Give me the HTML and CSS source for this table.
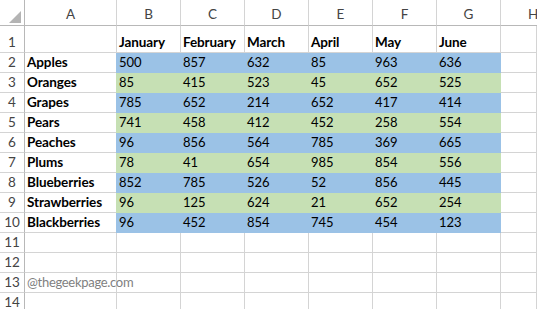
FILE: index.html
```html
<!DOCTYPE html>
<html>
<head>
<meta charset="utf-8">
<link rel="stylesheet" href="styles.css">
</head>
<body>
<div class="sheet">
  <div class="c corner"><span class="tri"></span></div>
  <div class="c ch">A</div><div class="c ch">B</div><div class="c ch">C</div><div class="c ch">D</div><div class="c ch">E</div><div class="c ch">F</div><div class="c ch">G</div><div class="c ch last">H</div>

  <div class="c rh r1">1</div><div class="c r1"></div><div class="c r1 b">January</div><div class="c r1 b">February</div><div class="c r1 b">March</div><div class="c r1 b">April</div><div class="c r1 b">May</div><div class="c r1 b">June</div><div class="c r1"></div>

  <div class="c rh">2</div><div class="c b">Apples</div><div class="c blue first">500</div><div class="c blue">857</div><div class="c blue">632</div><div class="c blue">85</div><div class="c blue">963</div><div class="c blue">636</div><div class="c"></div>
  <div class="c rh">3</div><div class="c b">Oranges</div><div class="c green first">85</div><div class="c green">415</div><div class="c green">523</div><div class="c green">45</div><div class="c green">652</div><div class="c green">525</div><div class="c"></div>
  <div class="c rh">4</div><div class="c b">Grapes</div><div class="c blue first">785</div><div class="c blue">652</div><div class="c blue">214</div><div class="c blue">652</div><div class="c blue">417</div><div class="c blue">414</div><div class="c"></div>
  <div class="c rh">5</div><div class="c b">Pears</div><div class="c green first">741</div><div class="c green">458</div><div class="c green">412</div><div class="c green">452</div><div class="c green">258</div><div class="c green">554</div><div class="c"></div>
  <div class="c rh">6</div><div class="c b">Peaches</div><div class="c blue first">96</div><div class="c blue">856</div><div class="c blue">564</div><div class="c blue">785</div><div class="c blue">369</div><div class="c blue">665</div><div class="c"></div>
  <div class="c rh">7</div><div class="c b">Plums</div><div class="c green first">78</div><div class="c green">41</div><div class="c green">654</div><div class="c green">985</div><div class="c green">854</div><div class="c green">556</div><div class="c"></div>
  <div class="c rh">8</div><div class="c b">Blueberries</div><div class="c blue first">852</div><div class="c blue">785</div><div class="c blue">526</div><div class="c blue">52</div><div class="c blue">856</div><div class="c blue">445</div><div class="c"></div>
  <div class="c rh">9</div><div class="c b">Strawberries</div><div class="c green first">96</div><div class="c green">125</div><div class="c green">624</div><div class="c green">21</div><div class="c green">652</div><div class="c green">254</div><div class="c"></div>
  <div class="c rh">10</div><div class="c b">Blackberries</div><div class="c blue first">96</div><div class="c blue">452</div><div class="c blue">854</div><div class="c blue">745</div><div class="c blue">454</div><div class="c blue">123</div><div class="c"></div>

  <div class="c rh">11</div><div class="c"></div><div class="c"></div><div class="c"></div><div class="c"></div><div class="c"></div><div class="c"></div><div class="c"></div><div class="c"></div>
  <div class="c rh">12</div><div class="c"></div><div class="c"></div><div class="c"></div><div class="c"></div><div class="c"></div><div class="c"></div><div class="c"></div><div class="c"></div>
  <div class="c rh">13</div><div class="c wm">@thegeekpage.com</div><div class="c"></div><div class="c"></div><div class="c"></div><div class="c"></div><div class="c"></div><div class="c"></div><div class="c"></div>
  <div class="c rh">14</div><div class="c"></div><div class="c"></div><div class="c"></div><div class="c"></div><div class="c"></div><div class="c"></div><div class="c"></div><div class="c"></div>
</div>
</body>
</html>
```
FILE: styles.css
```css
html, body {
  margin: 0;
  padding: 0;
  background: #ffffff;
  overflow: hidden;
}

.sheet {
  display: grid;
  grid-template-columns: 25px 92px 64px 64px 64px 64px 64px 64px 36px;
  grid-template-rows: 26px 27px repeat(13, 20px);
  width: 537px;
  font-family: Lato, "Liberation Sans", sans-serif;
  font-size: 13px;
  color: #000;
}

.c {
  box-sizing: border-box;
  border-right: 1px solid #d4d4d4;
  border-bottom: 1px solid #d4d4d4;
  display: flex;
  align-items: flex-end;
  padding: 0 0 2px 2px;
  line-height: 16px;
  white-space: nowrap;
  overflow: visible;
}

.corner {
  position: relative;
  border-right-color: #b8b8b8;
  border-bottom-color: #b8b8b8;
}

.tri {
  position: absolute;
  right: 3px;
  bottom: 2px;
  width: 0;
  height: 0;
  border-left: 12px solid transparent;
  border-bottom: 12px solid #b4b4b4;
}

.ch {
  justify-content: center;
  align-items: center;
  padding: 3px 0 0 0;
  color: #444;
  font-size: 13.5px;
  border-bottom-color: #b8b8b8;
}

.ch.last {
  justify-content: flex-start;
  padding-left: 27px;
  border-right: none;
}

.rh {
  justify-content: center;
  padding: 0 0 2px 0;
  color: #444;
  font-size: 13.5px;
  border-right-color: #b8b8b8;
}

.b {
  font-weight: 700;
  font-size: 13.5px;
  letter-spacing: -0.1px;
}

.blue {
  background: #9bc2e6;
  border-color: #9bc2e6;
}

.green {
  background: #c6e0b4;
  border-color: #c6e0b4;
}

.blue.first {
  box-shadow: -1px 0 0 #9bc2e6;
}

.green.first {
  box-shadow: -1px 0 0 #c6e0b4;
}

.wm {
  color: #7f7f7f;
  font-weight: 400;
  letter-spacing: -0.3px;
}
```
